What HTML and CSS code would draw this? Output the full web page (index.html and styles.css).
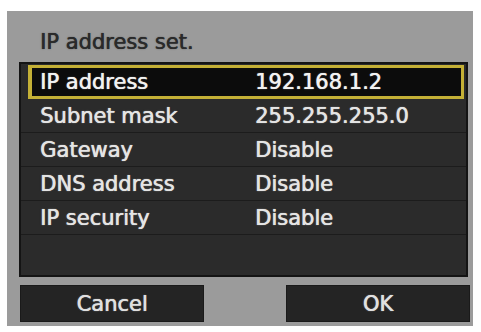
FILE: index.html
```html
<!DOCTYPE html>
<html>
<head>
<meta charset="utf-8">
<link rel="stylesheet" href="styles.css">
</head>
<body>
<div class="panel">
  <div class="title">IP address set.</div>
  <div class="list">
    <div class="row selected"><span class="label">IP address</span><span class="value">192.168.1.2</span></div>
    <div class="row"><span class="label">Subnet mask</span><span class="value">255.255.255.0</span></div>
    <div class="row"><span class="label">Gateway</span><span class="value">Disable</span></div>
    <div class="row"><span class="label">DNS address</span><span class="value">Disable</span></div>
    <div class="row"><span class="label">IP security</span><span class="value">Disable</span></div>
    <div class="row blank"></div>
  </div>
  <div class="buttons">
    <div class="btn">Cancel</div>
    <div class="btn">OK</div>
  </div>
</div>
</body>
</html>
```
FILE: styles.css
```css
html, body {
  margin: 0;
  padding: 0;
  background: #ffffff;
}
body {
  width: 481px;
  height: 332px;
  font-family: "DejaVu Sans", sans-serif;
  font-size: 21px;
}
.panel {
  margin: 11px 0 0 7px;
  width: 466px;
  height: 315px;
  box-sizing: border-box;
  background: #9b9b9b;
  padding: 18px 5px 4px 12px;
  display: flex;
  flex-direction: column;
}
.title {
  height: 26px;
  line-height: 26px;
  padding-left: 21px;
  color: #2a2a2a;
  margin-bottom: 7px;
  text-shadow: 0.4px 0 0 #2a2a2a, 0 0 1.5px rgba(40,40,40,0.6);
}
.list {
  height: 215px;
  box-sizing: border-box;
  border: 2px solid #141414;
  background: #2b2b2b;
  padding-top: 1px;
  display: flex;
  flex-direction: column;
}
.row {
  height: 34px;
  box-sizing: border-box;
  display: grid;
  grid-template-columns: 215px 1fr;
  align-items: center;
  padding-left: 19px;
  color: #e4e4e4;
  border-bottom: 1px solid #1c1c1c;
  text-shadow: 0.5px 0 0 #e4e4e4, 0 0 1.5px rgba(230,230,230,0.5);
}
.row.selected {
  margin: 0 2px 0 7px;
  padding-left: 8px;
  border: 3px solid #c4b036;
  border-left-width: 4px;
  background: #0c0c0c;
  color: #f2f2f2;
}
.row.blank {
  flex: 1;
  border-bottom: none;
}
.buttons {
  margin-top: 8px;
  display: flex;
  justify-content: space-between;
  padding: 0 0 0 1px;
  margin-right: -2px;
}
.btn {
  width: 184px;
  height: 37px;
  box-sizing: border-box;
  background: #242424;
  border: 1px solid #1a1a1a;
  color: #e0e0e0;
  display: flex;
  align-items: center;
  justify-content: center;
  text-shadow: 0.5px 0 0 #e0e0e0, 0 0 1.5px rgba(224,224,224,0.5);
}
```
